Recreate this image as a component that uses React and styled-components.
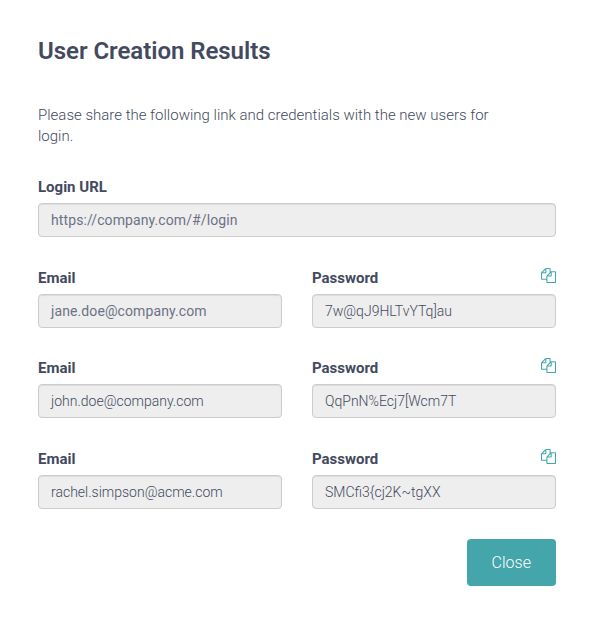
import React from "react";
import styled, { createGlobalStyle } from "styled-components";

const GlobalStyle = createGlobalStyle`
  * { box-sizing: border-box; }
  body { margin: 0; background: #fff; }
`;
const Dialog = styled.main`
  width: 595px;
  height: 634px;
  padding: 36px 39px 0 38px;
  background: #fff;
  color: #434a60;
  font-family: Roboto, "Liberation Sans", sans-serif;
  font-size: 15px;
`;
const Title = styled.h1`
  margin: 0;
  font-size: 24px;
  font-weight: 600;
  line-height: 30px;
  letter-spacing: -0.04px;
`;
const Intro = styled.p`
  margin: 39px 0 0;
  width: 470px;
  font-size: 15px;
  font-weight: 300;
  line-height: 21px;
`;
const Form = styled.div`
  display: grid;
  gap: 30.35px;
  margin-top: 30px;
`;
const Credentials = styled.div`
  display: grid;
  grid-template-columns: 1fr 1fr;
  gap: 30px;
`;
const Field = styled.div`
  display: flex;
  flex-direction: column;
`;
const LabelRow = styled.div`
  display: flex;
  justify-content: space-between;
  height: 26.2px;
`;
const Label = styled.label`
  font-weight: 700;
  line-height: 20px;
`;
const Value = styled.div`
  height: 34px;
  padding: 0 12px;
  border: 1px solid #ccc;
  border-radius: 4px;
  background: #eee;
  box-shadow: inset 0 1px 1px rgba(0, 0, 0, 0.075);
  color: ${({ $soft }) => ($soft ? "#6c7286" : "inherit")};
  font-size: 14px;
  font-weight: ${({ $soft }) => ($soft ? 400 : 300)};
  letter-spacing: ${({ $soft }) => ($soft ? "0.1px" : "normal")};
  line-height: 32px;
`;
const CopyButton = styled.button`
  width: 15px;
  height: 15px;
  padding: 0;
  border: 0;
  background: none;
  svg { display: block; }
`;
const Footer = styled.footer`
  display: flex;
  justify-content: flex-end;
  margin-top: 30px;
`;
const CloseButton = styled.button`
  width: 89.5px;
  height: 47px;
  padding: 0;
  border: 0;
  border-radius: 4px;
  background: #44a5ab;
  color: #fff;
  font: 300 16px Roboto, sans-serif;
`;
const CopyIcon = () => (
  <svg width="15" height="15" viewBox="0 0 1792 1792" fill="#44a5ab">
    <path d="M1696 384q40 0 68 28t28 68v1216q0 40-28 68t-68 28h-960q-40 0-68-28t-28-68v-288h-544q-40 0-68-28t-28-68v-672q0-40 20-88t48-76l408-408q28-28 76-48t88-20h416q40 0 68 28t28 68v328q68-40 128-40h416zm-544 213l-299 299h299v-299zm-640-384l-299 299h299v-299zm196 647l316-316v-416h-384v416q0 40-28 68t-68 28h-416v640h512v-256q0-40 20-88t48-76zm956 804v-1152h-384v416q0 40-28 68t-68 28h-416v640h896z" />
  </svg>
);
const users = [
  { email: "jane.doe@company.com", password: "7w@qJ9HLTvYTq]au", soft: true },
  { email: "john.doe@company.com", password: "QqPnN%Ecj7[Wcm7T" },
  { email: "rachel.simpson@acme.com", password: "SMCfi3{cj2K~tgXX" },
];
export default function App() {
  return (
    <Dialog>
      <GlobalStyle />
      <Title>User Creation Results</Title>
      <Intro>Please share the following link and credentials with the new users for login.</Intro>
      <Form>
        <Field>
          <LabelRow><Label>Login URL</Label></LabelRow>
          <Value $soft>https://company.com/#/login</Value>
        </Field>
        {users.map(({ email, password, soft }) => (
          <Credentials key={email}>
            <Field>
              <LabelRow><Label>Email</Label></LabelRow>
              <Value $soft={soft}>{email}</Value>
            </Field>
            <Field>
              <LabelRow>
                <Label>Password</Label>
                <CopyButton aria-label="Copy credentials"><CopyIcon /></CopyButton>
              </LabelRow>
              <Value>{password}</Value>
            </Field>
          </Credentials>
        ))}
      </Form>
      <Footer><CloseButton>Close</CloseButton></Footer>
    </Dialog>
  );
}
